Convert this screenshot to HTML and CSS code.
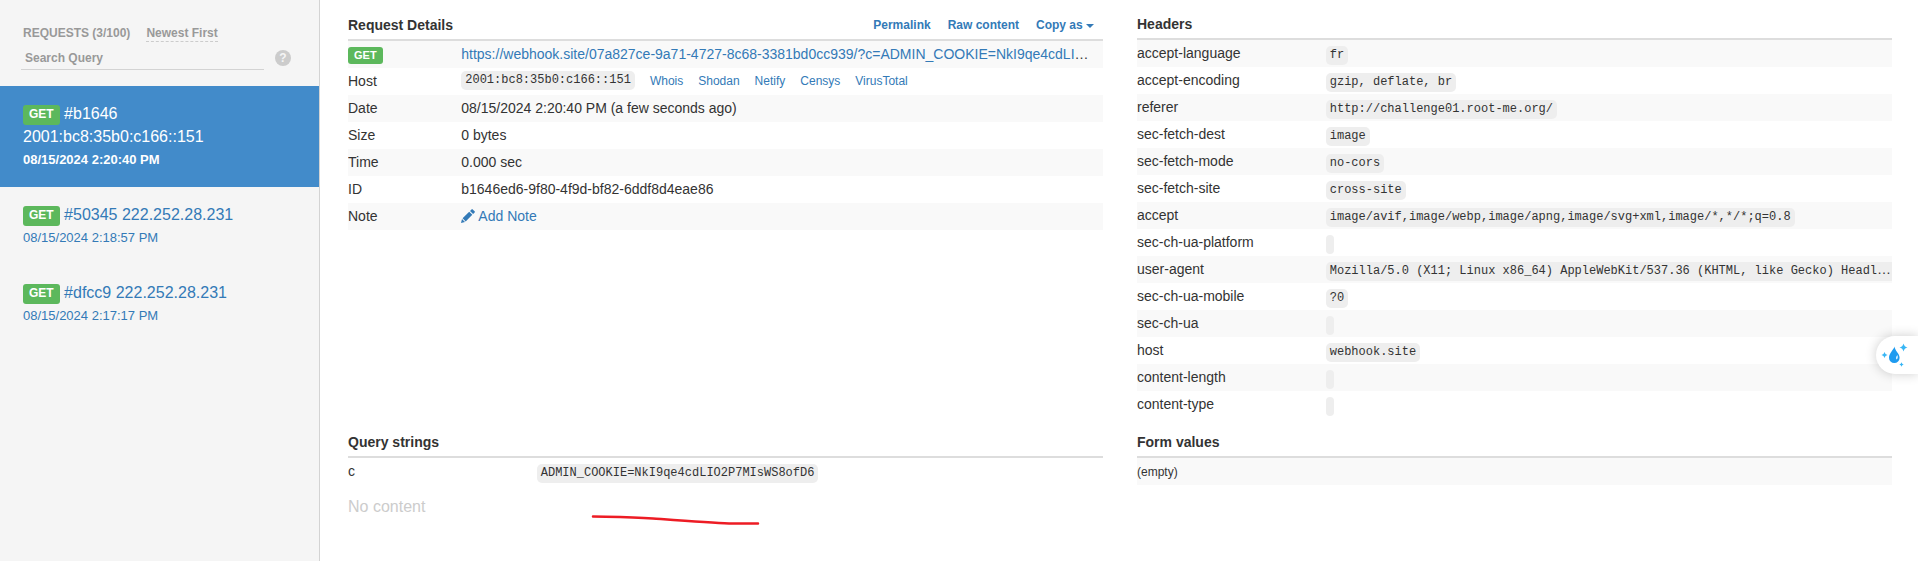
FILE: index.html
```html
<!DOCTYPE html>
<html lang="en">
<head>
<meta charset="utf-8">
<title>Webhook requests</title>
<link rel="stylesheet" href="styles.css">
</head>
<body>
<aside class="sidebar">
  <div class="sidebar-head">
    <div class="sidebar-title"><span>REQUESTS (3/100)</span><a class="sort" href="#">Newest First</a></div>
    <div class="search-row">
      <input class="search" type="text" placeholder="Search Query" aria-label="Search Query">
      <button class="help" type="button" aria-label="Search help">?</button>
    </div>
  </div>
  <nav class="requests">
    <a class="request active" href="#"><span class="request-name"><span class="badge">GET</span> #b1646 2001:bc8:35b0:c166::151</span><span class="request-date">08/15/2024 2:20:40 PM</span></a>
    <a class="request" href="#"><span class="request-name"><span class="badge">GET</span> #50345 222.252.28.231</span><span class="request-date">08/15/2024 2:18:57 PM</span></a>
    <a class="request" href="#"><span class="request-name"><span class="badge">GET</span> #dfcc9 222.252.28.231</span><span class="request-date">08/15/2024 2:17:17 PM</span></a>
  </nav>
</aside>
<main class="main">
  <section>
    <div class="heading heading-links">
      <h2>Request Details</h2>
      <div class="actions"><a href="#">Permalink</a><a href="#">Raw content</a><a href="#">Copy as <span class="caret"></span></a></div>
    </div>
    <table class="table narrow">
      <tr><th scope="row"><span class="badge small">GET</span></th><td><a href="#">https://webhook.site/07a827ce-9a71-4727-8c68-3381bd0cc939/?c=ADMIN_COOKIE=NkI9qe4cdLIO2P7MIsWS8ofD6</a></td></tr>
      <tr><th scope="row">Host</th><td><div class="host"><code>2001:bc8:35b0:c166::151</code><a href="#">Whois</a><a href="#">Shodan</a><a href="#">Netify</a><a href="#">Censys</a><a href="#">VirusTotal</a></div></td></tr>
      <tr><th scope="row">Date</th><td>08/15/2024 2:20:40 PM (a few seconds ago)</td></tr>
      <tr><th scope="row">Size</th><td>0 bytes</td></tr>
      <tr><th scope="row">Time</th><td>0.000 sec</td></tr>
      <tr><th scope="row">ID</th><td>b1646ed6-9f80-4f9d-bf82-6ddf8d4eae86</td></tr>
      <tr><th scope="row">Note</th><td><a href="#"><svg class="pencil" viewBox="0 0 14 14" aria-hidden="true"><path d="M0 14l1-4 3 3zM1.600 9.300l6.600-6.600 3.100 3.100-6.600 6.600zM9 1.900L10.500.400q.6-.6 1.200 0l1.900 1.900q.6.600 0 1.200L12.100 5z"/></svg> Add Note</a></td></tr>
    </table>
  </section>
  <section>
    <div class="heading"><h2>Headers</h2></div>
    <table class="table">
      <tr><th scope="row">accept-language</th><td><code>fr</code></td></tr>
      <tr><th scope="row">accept-encoding</th><td><code>gzip, deflate, br</code></td></tr>
      <tr><th scope="row">referer</th><td><code>http://challenge01.root-me.org/</code></td></tr>
      <tr><th scope="row">sec-fetch-dest</th><td><code>image</code></td></tr>
      <tr><th scope="row">sec-fetch-mode</th><td><code>no-cors</code></td></tr>
      <tr><th scope="row">sec-fetch-site</th><td><code>cross-site</code></td></tr>
      <tr><th scope="row">accept</th><td><code>image/avif,image/webp,image/apng,image/svg+xml,image/*,*/*;q=0.8</code></td></tr>
      <tr><th scope="row">sec-ch-ua-platform</th><td><code></code></td></tr>
      <tr><th scope="row">user-agent</th><td><code>Mozilla/5.0 (X11; Linux x86_64) AppleWebKit/537.36 (KHTML, like Gecko) HeadlessChrome</code></td></tr>
      <tr><th scope="row">sec-ch-ua-mobile</th><td><code>?0</code></td></tr>
      <tr><th scope="row">sec-ch-ua</th><td><code></code></td></tr>
      <tr><th scope="row">host</th><td><code>webhook.site</code></td></tr>
      <tr><th scope="row">content-length</th><td><code></code></td></tr>
      <tr><th scope="row">content-type</th><td><code></code></td></tr>
    </table>
  </section>
  <section class="query">
    <div class="heading"><h2>Query strings</h2></div>
    <table class="table plain">
      <tr><th scope="row">c</th><td><code>ADMIN_COOKIE=NkI9qe4cdLIO2P7MIsWS8ofD6</code></td></tr>
    </table>
    <p class="no-content">No content</p>
    <svg class="stroke" viewBox="0 0 170 12" aria-hidden="true"><path d="M2 2.500C28 3 42 3 62 4.500S120 9 138 9.500L167 9.500"/></svg>
  </section>
  <section>
    <div class="heading"><h2>Form values</h2></div>
    <table class="table">
      <tr><td class="empty">(empty)</td></tr>
    </table>
  </section>
</main>
<button class="float" type="button" aria-label="Assistant">
  <svg viewBox="0 0 28 26" aria-hidden="true"><path class="drop" d="M14.500 4.500C14 7.500 9 11 9 15.700a5.300 5.300 0 0 0 10.600 0C19.600 11.500 15 9 14.500 4.500z"/><path class="shine" d="M17.500 13q1 3-1 4.500-1.500-2 1-4.500z"/><path class="spark" d="M4.500 10q.5 2.500 3 3-2.500.5-3 3-.5-2.500-3-3 2.500-.5 3-3zM23.500 1.500q.8 3.300 4 4-3.200.7-4 4-.8-3.300-4-4 3.200-.7 4-4zM21.500 20.300q.4 1.800 2.200 2.200-1.800.4-2.200 2.200-.4-1.800-2.200-2.200 1.800-.4 2.200-2.200z"/></svg>
</button>
</body>
</html>
```

FILE: styles.css
```css
* { box-sizing: border-box; }

body {
  margin: 0;
  min-height: 100vh;
  display: flex;
  background: #fff;
  color: #333;
  font: 14px/20px "Liberation Sans", Arial, sans-serif;
}

a { color: #337ab7; text-decoration: none; }

button { border: 0; padding: 0; font: inherit; cursor: pointer; }

.sidebar {
  flex: 0 0 320px;
  background: #f5f5f5;
  border-right: 1px solid #d3d3d3;
}

.sidebar-head {
  padding: 25px 28px 16px 21px;
  color: #999;
  font-size: 12px;
  font-weight: bold;
}

.sidebar-title { display: flex; gap: 16px; padding-left: 2px; line-height: 16px; }

.sort { color: #999; border-bottom: 1px dashed #ccc; }

.search-row { display: flex; align-items: center; gap: 11px; margin-top: 4px; }

.search {
  flex: 1;
  min-width: 0;
  height: 24px;
  padding: 0 4px;
  border: 0;
  border-bottom: 1px solid #d3d3d3;
  background: transparent;
  font: inherit;
}

.search::placeholder { color: #999; opacity: 1; }

.help {
  width: 16px;
  height: 16px;
  border-radius: 50%;
  background: #ccc;
  color: #f5f5f5;
  font-size: 12px;
  font-weight: bold;
  line-height: 16px;
}

.request { display: block; padding: 16px 22px 15px 23px; }

.request-name { display: block; font-size: 16px; line-height: 23px; }

.request-date { display: block; font-size: 13px; line-height: 24px; }

.request.active { background: #428bca; color: #fff; }

.request.active .request-date { font-weight: bold; }

.badge {
  display: inline-block;
  padding: 0 6px 2px;
  border-radius: 3px;
  background: #5cb85c;
  color: #fff;
  font-size: 12px;
  font-weight: bold;
  line-height: 18px;
  vertical-align: bottom;
}

.badge.small { padding: 0 6px; font-size: 11px; line-height: 17px; }

.main {
  flex: 1;
  min-width: 0;
  display: grid;
  grid-template-columns: repeat(2, minmax(0, 1fr));
  align-content: start;
  column-gap: 34px;
  padding: 0 26px 0 28px;
}

.heading {
  display: flex;
  justify-content: space-between;
  padding: 15px 0 5px;
  border-bottom: 2px solid #ddd;
  line-height: 18px;
}

.heading-links { align-items: center; padding-bottom: 4px; }

h2 { margin: 0; font-size: 14px; }

.actions {
  display: flex;
  gap: 17px;
  padding-right: 9px;
  font-size: 12px;
  font-weight: bold;
  line-height: 20px;
}

.caret {
  display: inline-block;
  border: 4px solid transparent;
  border-top-color: currentColor;
  border-bottom: 0;
  vertical-align: middle;
}

.table { width: 100%; table-layout: fixed; border-collapse: collapse; }

.table tr:nth-child(odd) { background: #f9f9f9; }

.table.plain tr { background: none; }

.table th, .table td {
  height: 27px;
  padding: 0 0 2px;
  overflow: hidden;
  text-align: left;
  text-overflow: ellipsis;
  white-space: nowrap;
  font-weight: normal;
}

.table th { width: 25%; }

.table.narrow th { width: 15%; }

.table.narrow td { padding-right: 8px; }

.table .empty { padding-bottom: 0; font-size: 12px; }

code {
  display: inline;
  padding: 2px 4px 3px;
  border-radius: 5px;
  background: #eee;
  font: 12px "Liberation Mono", monospace;
}

.host { display: flex; align-items: center; gap: 15px; font-size: 12px; }

.pencil { width: 14px; height: 14px; fill: currentColor; vertical-align: -2px; }

.query { position: relative; }

.no-content { margin: 12px 0 0; color: #ccc; font-size: 16px; }

.stroke {
  position: absolute;
  left: 243px;
  top: 96px;
  width: 170px;
  height: 12px;
  fill: none;
  stroke: #ed1c24;
  stroke-width: 2.5;
  stroke-linecap: round;
}

.float {
  position: fixed;
  right: 0;
  top: 336px;
  width: 42px;
  height: 38px;
  padding-left: 4px;
  border-radius: 19px 0 0 19px;
  background: #fff;
  box-shadow: 0 0 12px rgba(0, 0, 0, .2);
  text-align: left;
}

.float svg { display: block; width: 28px; height: 26px; }

.drop { fill: #1e9bf0; }

.shine { fill: #d8efff; }

.spark { fill: #38b6f5; }
```
